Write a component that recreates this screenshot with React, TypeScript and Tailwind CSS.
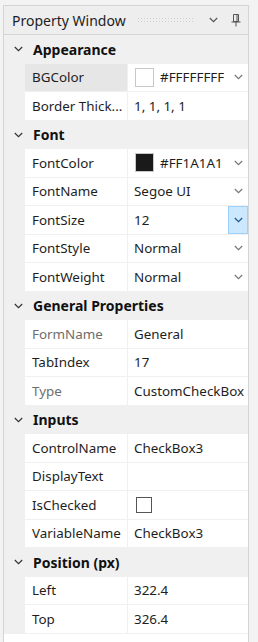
import React from 'react';

type Prop = {
  name: string;
  value?: string;
  kind?: 'text' | 'color' | 'check';
  swatch?: string;
  dropdown?: boolean;
  active?: boolean;
  readOnly?: boolean;
  selected?: boolean;
};

type Group = { title: string; props: Prop[] };

const groups: Group[] = [
  {
    title: 'Appearance',
    props: [
      { name: 'BGColor', value: '#FFFFFFFF', kind: 'color', swatch: 'bg-white', dropdown: true, selected: true },
      { name: 'Border Thick...', value: '1, 1, 1, 1' },
    ],
  },
  {
    title: 'Font',
    props: [
      { name: 'FontColor', value: '#FF1A1A1', kind: 'color', swatch: 'bg-[#1a1a1a]', dropdown: true },
      { name: 'FontName', value: 'Segoe UI', dropdown: true },
      { name: 'FontSize', value: '12', dropdown: true, active: true },
      { name: 'FontStyle', value: 'Normal', dropdown: true },
      { name: 'FontWeight', value: 'Normal', dropdown: true },
    ],
  },
  {
    title: 'General Properties',
    props: [
      { name: 'FormName', value: 'General', readOnly: true },
      { name: 'TabIndex', value: '17' },
      { name: 'Type', value: 'CustomCheckBox', readOnly: true },
    ],
  },
  {
    title: 'Inputs',
    props: [
      { name: 'ControlName', value: 'CheckBox3' },
      { name: 'DisplayText', value: '' },
      { name: 'IsChecked', kind: 'check' },
      { name: 'VariableName', value: 'CheckBox3' },
    ],
  },
  {
    title: 'Position (px)',
    props: [
      { name: 'Left', value: '322.4' },
      { name: 'Top', value: '326.4' },
    ],
  },
];

const Chevron = ({ className = '' }: { className?: string }) => (
  <svg width="9" height="6" viewBox="0 0 9 6" className={className}>
    <path d="M0.8 1 L4.5 4.6 L8.2 1" fill="none" stroke="currentColor" strokeWidth="1.2" />
  </svg>
);

const Pin = () => (
  <svg width="10" height="13" viewBox="0 0 10 13" className="text-[#555]">
    <path d="M2.5 0.5 H7.5 V7.5 H2.5 Z" fill="none" stroke="currentColor" strokeWidth="1" />
    <path d="M6 1 V7" stroke="currentColor" strokeWidth="1" />
    <path d="M0.5 8 H9.5" stroke="currentColor" strokeWidth="1" />
    <path d="M5 8 V12.5" stroke="currentColor" strokeWidth="1" />
  </svg>
);

const PropRow = ({ p }: { p: Prop }) => (
  <div className="flex h-[28.5px]">
    <div className="w-[21px] shrink-0 bg-[#f0f0f0]" />
    <div
      className={`w-[103px] shrink-0 flex items-center pl-[7px] border-b border-r border-[#f0f0f0] overflow-hidden whitespace-nowrap ${
        p.selected ? 'bg-[#e6e6e6]' : 'bg-white'
      } ${p.readOnly ? 'text-[#6d6d6d]' : 'text-[#1e1e1e]'}`}
    >
      {p.name}
    </div>
    <div className="flex-1 min-w-0 flex items-center bg-white border-b border-[#f0f0f0] relative">
      {p.kind === 'color' && (
        <div className={`w-[19px] h-[19px] ml-[7px] mr-[6px] shrink-0 border border-[#c8c8c8] ${p.swatch}`} />
      )}
      {p.kind === 'check' && <div className="w-[16px] h-[16px] ml-[8px] border border-[#555] bg-white" />}
      {p.kind !== 'check' && (
        <span className={`whitespace-nowrap overflow-hidden ${p.kind === 'color' ? '' : 'pl-[6px]'} text-[#1e1e1e]`}>
          {p.value}
        </span>
      )}
      {p.dropdown && !p.active && (
        <div className="ml-auto w-[20px] shrink-0 flex items-center justify-center text-[#777] bg-white">
          <Chevron />
        </div>
      )}
      {p.active && (
        <div className="ml-auto w-[20px] h-full shrink-0 flex items-center justify-center bg-[#cce8ff] border border-[#99d1ff] text-[#1c5490]">
          <Chevron />
        </div>
      )}
    </div>
  </div>
);

const GroupHeader = ({ title }: { title: string }) => (
  <div className="flex items-center h-[28.5px] bg-[#f0f0f0]">
    <div className="w-[25px] flex items-center justify-center pl-[3px] text-[#333]">
      <Chevron />
    </div>
    <span className="pl-[4px] font-bold text-[14px] text-[#111]">{title}</span>
  </div>
);

export default function App() {
  return (
    <div className="w-[258px] h-[642px] bg-[#f3f3f3] pt-[5px] pl-[3px] pr-[9px] overflow-hidden font-['Noto_Sans','Open_Sans',sans-serif] text-[13.4px]">
      <div className="h-full flex flex-col border border-b-0 border-[#d4d4d4] bg-[#eeeeee]">
        {/* Header */}
        <div className="h-[28px] shrink-0 flex items-center pl-[8px] pr-[6px] text-[#1e1e1e] text-[14px]">
          <span className="whitespace-nowrap">Property Window</span>
          <div className="ml-[11px] w-[58px] h-[6px] bg-[radial-gradient(#d0d0d0_0.8px,transparent_0.9px)] bg-[length:3px_3px]" />
          <div className="ml-[14px] text-[#555]">
            <Chevron />
          </div>
          <div className="ml-[13px]">
            <Pin />
          </div>
        </div>

        {/* Grid */}
        <div className="flex-1 border-t border-[#d4d4d4] bg-white overflow-hidden">
          {groups.map((g) => (
            <div key={g.title}>
              <GroupHeader title={g.title} />
              {g.props.map((p) => (
                <PropRow key={p.name} p={p} />
              ))}
            </div>
          ))}
        </div>
      </div>
    </div>
  );
}
